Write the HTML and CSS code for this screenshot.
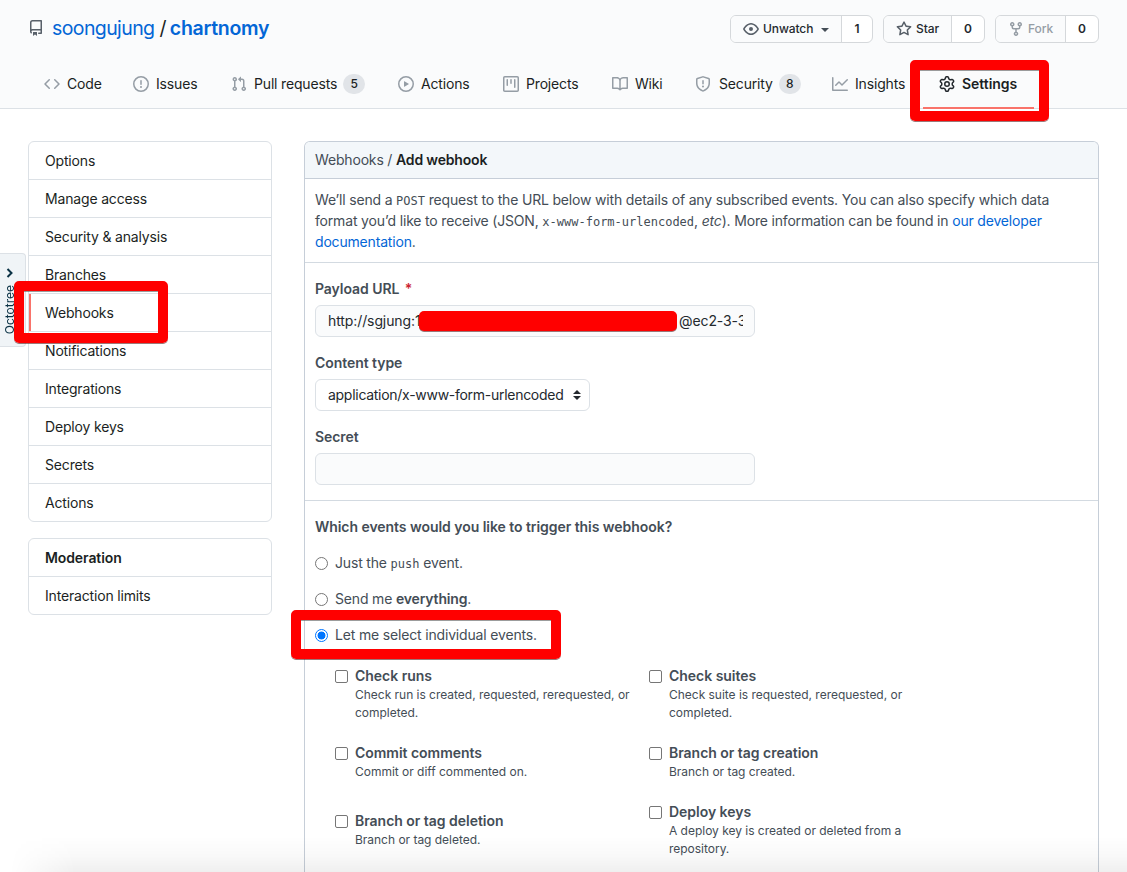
FILE: index.html
```html
<!DOCTYPE html>
<html lang="en">
<head>
<meta charset="utf-8">
<title>Add webhook · soongujung/chartnomy</title>
<link rel="stylesheet" href="styles.css">
</head>
<body>
<header class="repo-head">
  <div class="repo-top">
    <svg class="repo-icon" viewBox="0 0 16 16" width="16" height="16"><path fill-rule="evenodd" d="M2 2.5A2.5 2.5 0 014.5 0h8.75a.75.75 0 01.75.75v12.5a.75.75 0 01-.75.75h-2.5a.75.75 0 110-1.5h1.75v-2h-8a1 1 0 00-.714 1.7.75.75 0 01-1.072 1.05A2.495 2.495 0 012 11.500v-9zm10.500-1V9h-8c-.356 0-.694.074-1 .208V2.500a1 1 0 011-1h8zM5 12.250v3.250a.25.25 0 00.4.2l1.450-1.087a.25.25 0 01.3 0L8.600 15.700a.25.25 0 00.4-.2v-3.250a.25.25 0 00-.25-.25h-3.500a.25.25 0 00-.25.25z"/></svg>
    <h1 class="repo-name"><a class="owner">soongujung</a><span class="slash">/</span><a class="repo">chartnomy</a></h1>
    <div class="repo-actions">
      <div class="btn-group watch"><span class="btn"><svg viewBox="0 0 16 16" width="16" height="16"><path fill-rule="evenodd" d="M1.679 7.932c.412-.621 1.242-1.750 2.366-2.717C5.175 4.242 6.527 3.500 8 3.500c1.473 0 2.824.742 3.955 1.715 1.124.967 1.954 2.096 2.366 2.717a.119.119 0 010 .136c-.412.621-1.242 1.750-2.366 2.717C10.825 11.758 9.473 12.500 8 12.500c-1.473 0-2.824-.742-3.955-1.715C2.920 9.818 2.090 8.690 1.679 8.068a.119.119 0 010-.136zM8 2c-1.981 0-3.670.992-4.933 2.078C1.797 5.169.880 6.423.430 7.100a1.619 1.619 0 000 1.798c.450.678 1.367 1.932 2.637 3.024C4.329 13.008 6.019 14 8 14c1.981 0 3.670-.992 4.933-2.078 1.270-1.091 2.187-2.345 2.637-3.023a1.619 1.619 0 000-1.798c-.450-.678-1.367-1.932-2.637-3.023C11.671 2.992 9.981 2 8 2zm0 8a2 2 0 100-4 2 2 0 000 4z"/></svg>Unwatch<i class="caret"></i></span><span class="count">1</span></div>
      <div class="btn-group star"><span class="btn"><svg viewBox="0 0 16 16" width="16" height="16"><path fill-rule="evenodd" d="M8 .25a.75.75 0 01.673.418l1.882 3.815 4.210.612a.75.75 0 01.416 1.279l-3.046 2.970.719 4.192a.75.75 0 01-1.088.791L8 12.347l-3.766 1.980a.75.75 0 01-1.088-.790l.720-4.194L.818 6.374a.75.75 0 01.416-1.280l4.210-.611L7.327.668A.75.75 0 018 .250zm0 2.445L6.615 5.500a.75.75 0 01-.564.410l-3.097.450 2.240 2.184a.75.75 0 01.216.664l-.528 3.084 2.769-1.456a.75.75 0 01.698 0l2.770 1.456-.530-3.084a.75.75 0 01.216-.664l2.240-2.183-3.096-.450a.75.75 0 01-.564-.410L8 2.694z"/></svg>Star</span><span class="count">0</span></div>
      <div class="btn-group fork"><span class="btn disabled"><svg viewBox="0 0 16 16" width="16" height="16"><path fill-rule="evenodd" d="M5 3.250a.75.75 0 11-1.500 0 .75.75 0 011.500 0zm0 2.122a2.250 2.250 0 10-1.500 0v.878A2.250 2.250 0 005.750 8.500h1.500v2.128a2.251 2.251 0 101.500 0V8.500h1.500a2.250 2.250 0 002.250-2.250v-.878a2.250 2.250 0 10-1.500 0v.878a.75.75 0 01-.75.750h-4.500A.75.75 0 015 6.250v-.878zm3.750 7.378a.75.75 0 11-1.500 0 .75.75 0 011.500 0zm3-8.750a.75.75 0 100-1.500.75.75 0 000 1.500z"/></svg>Fork</span><span class="count">0</span></div>
    </div>
  </div>
  <nav class="tabs">
    <a class="tab t-code"><svg viewBox="0 0 16 16" width="16" height="16"><path fill-rule="evenodd" d="M4.720 3.220a.75.75 0 011.060 1.060L2.060 8l3.720 3.720a.75.75 0 11-1.060 1.060L.470 8.530a.75.75 0 010-1.060l4.250-4.250zm6.560 0a.75.75 0 10-1.060 1.060L13.940 8l-3.720 3.720a.75.75 0 101.060 1.060l4.250-4.250a.75.75 0 000-1.060l-4.250-4.250z"/></svg><span>Code</span></a>
    <a class="tab t-issues"><svg viewBox="0 0 16 16" width="16" height="16"><path fill-rule="evenodd" d="M8 1.500a6.500 6.500 0 100 13 6.500 6.500 0 000-13zM0 8a8 8 0 1116 0A8 8 0 010 8zm9 3a1 1 0 11-2 0 1 1 0 012 0zm-.25-6.250a.75.75 0 00-1.500 0v3.500a.75.75 0 001.500 0v-3.500z"/></svg><span>Issues</span></a>
    <a class="tab t-pulls"><svg viewBox="0 0 16 16" width="16" height="16"><path fill-rule="evenodd" d="M7.177 3.073L9.573.677A.25.25 0 0110 .854v4.792a.25.25 0 01-.427.177L7.177 3.427a.25.25 0 010-.354zM3.750 2.500a.75.75 0 100 1.500.75.75 0 000-1.500zm-2.250.750a2.250 2.250 0 113 2.122v5.256a2.251 2.251 0 11-1.500 0V5.372A2.250 2.250 0 011.500 3.250zM11 2.500h-1V4h1a1 1 0 011 1v5.628a2.251 2.251 0 101.500 0V5A2.500 2.500 0 0011 2.500zm1 10.250a.75.75 0 111.500 0 .75.75 0 01-1.500 0zM3.750 12a.75.75 0 100 1.500.75.75 0 000-1.500z"/></svg><span>Pull requests</span><b class="badge">5</b></a>
    <a class="tab t-actions"><svg viewBox="0 0 16 16" width="16" height="16"><path fill-rule="evenodd" d="M1.500 8a6.500 6.500 0 1113 0 6.500 6.500 0 01-13 0zM8 0a8 8 0 100 16A8 8 0 008 0zM6.379 5.227A.25.25 0 006 5.442v5.117a.25.25 0 00.379.214l4.264-2.559a.25.25 0 000-.428L6.379 5.227z"/></svg><span>Actions</span></a>
    <a class="tab t-projects"><svg viewBox="0 0 16 16" width="16" height="16"><path fill-rule="evenodd" d="M1.750 0A1.750 1.750 0 000 1.750v12.500C0 15.216.784 16 1.750 16h12.500A1.750 1.750 0 0016 14.250V1.750A1.750 1.750 0 0014.250 0H1.750zM1.500 1.750a.25.25 0 01.25-.25h12.500a.25.25 0 01.25.25v12.500a.25.25 0 01-.25.25H1.750a.25.25 0 01-.25-.25V1.750zM11.750 3a.75.75 0 00-.75.750v7.500a.75.75 0 001.500 0v-7.500a.75.75 0 00-.75-.75zm-8.250.750a.75.75 0 011.500 0v5.500a.75.75 0 01-1.500 0v-5.500zM8 3a.75.75 0 00-.75.750v3.500a.75.75 0 001.500 0v-3.500A.75.75 0 008 3z"/></svg><span>Projects</span></a>
    <a class="tab t-wiki"><svg viewBox="0 0 16 16" width="16" height="16"><path fill-rule="evenodd" d="M0 1.750A.75.75 0 01.750 1h4.253c1.227 0 2.317.590 3 1.501A3.744 3.744 0 0111.006 1h4.245a.75.75 0 01.750.750v10.500a.75.75 0 01-.75.750h-4.507a2.250 2.250 0 00-1.591.659l-.622.621a.75.75 0 01-1.060 0l-.622-.621A2.250 2.250 0 005.258 13H.750a.75.75 0 01-.75-.75V1.750zm8.755 3a2.250 2.250 0 012.250-2.250H14.500v9h-3.757c-.710 0-1.400.201-1.992.572l.004-7.322zm-1.504 7.324l.004-5.073-.002-2.253A2.250 2.250 0 005.003 2.500H1.500v9h3.757a3.750 3.750 0 011.994.574z"/></svg><span>Wiki</span></a>
    <a class="tab t-security"><svg viewBox="0 0 16 16" width="16" height="16"><path fill-rule="evenodd" d="M7.467.133a1.750 1.750 0 011.066 0l5.250 1.680A1.750 1.750 0 0115 3.480V7c0 1.566-.320 3.182-1.303 4.682-.983 1.498-2.585 2.813-5.032 3.855a1.700 1.700 0 01-1.330 0c-2.447-1.042-4.049-2.357-5.032-3.855C1.320 10.182 1 8.566 1 7V3.480a1.750 1.750 0 011.217-1.667l5.250-1.680zm.610 1.429a.25.25 0 00-.153 0l-5.250 1.680a.25.25 0 00-.174.238V7c0 1.358.275 2.666 1.057 3.860.784 1.194 2.121 2.340 4.366 3.297a.2.2 0 00.154 0c2.245-.956 3.582-2.104 4.366-3.298C13.225 9.666 13.500 8.360 13.500 7V3.480a.25.25 0 00-.174-.237l-5.250-1.680zM9 10.500a1 1 0 11-2 0 1 1 0 012 0zm-.25-5.750a.75.75 0 10-1.500 0v3a.75.75 0 001.500 0v-3z"/></svg><span>Security</span><b class="badge">8</b></a>
    <a class="tab t-insights"><svg viewBox="0 0 16 16" width="16" height="16"><path fill-rule="evenodd" d="M1.500 1.750a.75.75 0 00-1.500 0v12.500c0 .414.336.750.750.750h14.500a.75.75 0 000-1.500H1.500V1.750zm14.280 2.530a.75.75 0 00-1.060-1.060L10 7.940 7.530 5.470a.75.75 0 00-1.060 0L3.220 8.720a.75.75 0 001.060 1.060L7 7.060l2.470 2.470a.75.75 0 001.060 0l5.250-5.250z"/></svg><span>Insights</span></a>
    <a class="tab t-settings selected"><svg viewBox="0 0 16 16" width="16" height="16"><path fill-rule="evenodd" d="M7.429 1.525a6.593 6.593 0 011.142 0c.036.003.108.036.137.146l.289 1.105c.147.560.550.967.997 1.189.174.086.341.183.501.290.417.278.970.423 1.530.270l1.102-.303c.110-.030.175.016.195.046.219.310.410.641.573.989.014.031.022.110-.059.190l-.815.806c-.411.406-.562.957-.530 1.456a4.588 4.588 0 010 .582c-.032.499.119 1.050.530 1.456l.815.806c.080.080.073.159.059.190a6.494 6.494 0 01-.573.990c-.020.029-.086.074-.195.045l-1.103-.303c-.559-.153-1.112-.008-1.529.270-.160.107-.327.204-.500.290-.449.222-.851.628-.998 1.189l-.289 1.105c-.029.110-.101.143-.137.146a6.613 6.613 0 01-1.142 0c-.036-.003-.108-.037-.137-.146l-.289-1.105c-.147-.560-.550-.967-.997-1.189a4.502 4.502 0 01-.501-.290c-.417-.278-.970-.423-1.530-.270l-1.102.303c-.110.030-.175-.016-.195-.046a6.492 6.492 0 01-.573-.989c-.014-.031-.022-.110.059-.190l.815-.806c.411-.406.562-.957.530-1.456a4.587 4.587 0 010-.582c.032-.499-.119-1.050-.530-1.456l-.815-.806c-.080-.080-.073-.159-.059-.190a6.440 6.440 0 01.573-.990c.020-.029.086-.075.195-.045l1.103.303c.559.153 1.112.008 1.529-.270.160-.107.327-.204.500-.290.449-.222.851-.628.998-1.189l.289-1.105c.029-.110.101-.143.137-.146zM8 0c-.236 0-.470.010-.701.030-.743.065-1.290.615-1.458 1.261l-.290 1.106c-.017.066-.078.158-.211.224a5.994 5.994 0 00-.668.386c-.123.082-.233.090-.300.071L3.270 2.776c-.644-.177-1.392.020-1.820.630a7.977 7.977 0 00-.704 1.217c-.315.675-.111 1.422.363 1.891l.815.806c.050.048.098.147.088.294a6.084 6.084 0 000 .772c.010.147-.038.246-.088.294l-.815.806c-.474.469-.678 1.216-.363 1.891.200.428.436.835.704 1.218.428.609 1.176.806 1.820.630l1.103-.303c.066-.019.176-.011.299.071.213.143.436.272.668.386.133.066.194.158.212.224l.289 1.106c.169.646.715 1.196 1.458 1.260a8.094 8.094 0 001.402 0c.743-.064 1.290-.614 1.458-1.260l.290-1.106c.017-.066.078-.158.211-.224a5.980 5.980 0 00.668-.386c.123-.082.233-.090.300-.071l1.102.302c.644.177 1.392-.020 1.820-.630.268-.382.505-.789.704-1.217.315-.675.111-1.422-.364-1.891l-.814-.806c-.050-.048-.098-.147-.088-.294a6.100 6.100 0 000-.772c-.010-.147.039-.246.088-.294l.814-.806c.475-.469.679-1.216.364-1.891a7.992 7.992 0 00-.704-1.218c-.428-.609-1.176-.806-1.820-.630l-1.103.303c-.066.019-.176.011-.299-.071a5.991 5.991 0 00-.668-.386c-.133-.066-.194-.158-.212-.224L10.160 1.290C9.990.645 9.444.095 8.701.031A8.094 8.094 0 008 0zm1.500 8a1.500 1.500 0 11-3 0 1.500 1.500 0 013 0zM11 8a3 3 0 11-6 0 3 3 0 016 0z"/></svg><span>Settings</span></a>
  </nav>
</header>

<div class="layout">
  <aside class="side">
    <ul class="menu">
      <li>Options</li><li>Manage access</li><li>Security &amp; analysis</li><li>Branches</li><li class="current">Webhooks</li><li>Notifications</li><li>Integrations</li><li>Deploy keys</li><li>Secrets</li><li>Actions</li>
    </ul>
    <ul class="menu">
      <li class="menu-title">Moderation</li><li>Interaction limits</li>
    </ul>
  </aside>

  <main class="panel">
    <h2 class="panel-title">Webhooks / <b>Add webhook</b></h2>
    <p class="intro">We’ll send a <code>POST</code> request to the URL below with details of any subscribed events. You can also specify which data<br>format you’d like to receive (JSON, <code>x-www-form-urlencoded</code>, <em>etc</em>). More information can be found in <a>our developer</a><br><a>documentation</a>.</p>
    <section class="fields">
      <label class="label">Payload URL <span class="req">*</span></label>
      <div class="input url"><span class="url-text"><span>http://sgjung:1</span><span class="url-end">@ec2-3-3</span></span><i class="redaction"></i></div>
      <label class="label">Content type</label>
      <div class="select"><span>application/x-www-form-urlencoded</span><svg viewBox="0 0 8 10" width="8" height="10"><path d="M4 0l4 4H0zM4 10L0 6h8z"/></svg></div>
      <label class="label">Secret</label>
      <div class="input"></div>
    </section>
    <section class="events">
      <h3 class="question">Which events would you like to trigger this webhook?</h3>
      <div class="choice"><i class="radio"></i><span>Just the <code>push</code> event.</span></div>
      <div class="choice"><i class="radio"></i><span>Send me <b>everything</b>.</span></div>
      <div class="choice"><i class="radio checked"></i><span>Let me select individual events.</span></div>
      <div class="columns">
        <div class="column">
          <div class="event"><i class="check"></i><div><b>Check runs</b><p>Check run is created, requested, rerequested, or<br>completed.</p></div></div>
          <div class="event tall"><i class="check"></i><div><b>Commit comments</b><p>Commit or diff commented on.</p></div></div>
          <div class="event"><i class="check"></i><div><b>Branch or tag deletion</b><p>Branch or tag deleted.</p></div></div>
        </div>
        <div class="column">
          <div class="event"><i class="check"></i><div><b>Check suites</b><p>Check suite is requested, rerequested, or<br>completed.</p></div></div>
          <div class="event"><i class="check"></i><div><b>Branch or tag creation</b><p>Branch or tag created.</p></div></div>
          <div class="event"><i class="check"></i><div><b>Deploy keys</b><p>A deploy key is created or deleted from a<br>repository.</p></div></div>
        </div>
      </div>
    </section>
  </main>
</div>

<div class="octotree"><svg viewBox="0 0 8 10" width="8" height="10"><path d="M1.500 1l4 4-4 4" fill="none" stroke="#0b3245" stroke-width="2"/></svg><span>Octotree</span></div>
<div class="mark mark-settings"></div>
<div class="mark mark-webhooks"></div>
<div class="mark mark-events"></div>
<div class="bottom-shadow"></div>
</body>
</html>
```
FILE: styles.css
```css
* { box-sizing: border-box; }
body {
  margin: 0;
  position: relative;
  width: 1127px;
  height: 872px;
  overflow: hidden;
  background: #fff;
  color: #1b1f23;
  font: 14px/21px Inter, "Liberation Sans", sans-serif;
  letter-spacing: -0.17px;
}
h1, h2, h3, p, ul { margin: 0; padding: 0; }
ul { list-style: none; }
b { font-weight: 600; }
svg { display: block; flex: none; fill: currentColor; }
a { color: #0366d6; }
code { font: 12px/1 "DejaVu Sans Mono", monospace; letter-spacing: 0; }

/* Repository header */
.repo-head { height: 109px; background: #fafbfc; border-bottom: 1px solid #dce1e6; }
.repo-top { display: flex; align-items: center; height: 60px; padding: 0 28px; }
.repo-icon { margin: -5px 8px 0 0; color: #586069; }
.repo-name { font-size: 19.5px; line-height: 30px; font-weight: 400; margin-top: -4px; letter-spacing: -0.6px; white-space: nowrap; }
.slash { margin: 0 4px 0 5px; }
.repo { font-weight: 600; letter-spacing: -0.3px; }
.repo-actions { display: flex; gap: 10px; margin: -2px 0 0 auto; }
.btn-group { display: flex; height: 28px; border: 1px solid #d5d8db; border-radius: 6px; background: #fff; font-size: 12px; font-weight: 500; letter-spacing: -0.1px; color: #24292e; overflow: hidden; }
.btn { display: flex; align-items: center; flex: 1; padding: 0 0 1px 12px; background: #fafbfc; border-right: 1px solid #d5d8db; }
.btn svg { margin: 1px 4px 0 0; color: #586069; }
.btn.disabled, .btn.disabled svg { color: #959da5; }
.count { width: 30px; display: flex; align-items: center; justify-content: center; padding-bottom: 1px; font-weight: 600; }
.watch { width: 143px; }
.star { width: 102px; }
.fork { width: 104px; }
.star .count, .fork .count { width: 32px; }
.caret { margin: 2px 0 0 8px; border: 4px solid transparent; border-top-color: #444d56; border-bottom: 0; }

.tabs { display: flex; height: 49px; padding-left: 28px; }
.tab { display: flex; align-items: center; padding: 0 0 1px 16px; white-space: nowrap; color: #1b1f23; }
.tab span { margin-top: -2px; }
.tab svg { margin-right: 7px; color: #959da5; }
.t-code { width: 89px; }
.t-issues { width: 98px; }
.t-pulls { width: 167px; }
.t-actions { width: 105px; }
.t-projects { width: 109px; }
.t-wiki { width: 83px; }
.t-security { width: 137px; }
.t-insights { width: 107px; }
.t-settings { width: 111px; }
.tab.t-security svg { margin-right: 8px; }
.tab.selected { font-weight: 600; letter-spacing: -0.05px; border-bottom: 2px solid #f9736a; padding-bottom: 0; padding-top: 1px; }
.tab.selected svg { color: #24292e; }
.badge { margin-left: 6px; min-width: 22px; height: 20px; border-radius: 10px; background: #e1e4e8; text-align: center; font-size: 12px; line-height: 20px; font-weight: 500; }

/* Page body */
.layout { display: flex; gap: 32px; padding: 32px 28px 0; }
.side { width: 244px; flex: none; }
.menu { border: 1px solid #dce1e6; border-radius: 6px; margin-bottom: 16px; }
.menu li { height: 38px; padding: 8px 16px; border-bottom: 1px solid #dce1e6; }
.menu li:last-child { height: 37px; border-bottom: 0; }
.menu .current { box-shadow: inset 2px 0 #f9736a; }
.menu-title { font-weight: 600; letter-spacing: -0.1px; }

.panel { width: 795px; height: 731px; border: 1px solid #c6ced8; border-bottom: 0; border-radius: 6px 6px 0 0; color: #444d56; overflow: hidden; }
.panel-title { height: 37px; padding: 7px 10px; font-size: 14px; line-height: 21px; font-weight: 400; background: #f3f7fa; border-bottom: 1px solid #c6ced8; }
.panel-title b { color: #1b1f23; }
.intro { height: 84px; padding: 10px 10px 0; border-bottom: 1px solid #d3dae1; white-space: nowrap; letter-spacing: -0.18px; }
.intro code { letter-spacing: 0; }
.fields { height: 238px; padding: 15px 10px 0; border-bottom: 1px solid #d3dae1; }
.label { display: block; height: 21px; margin-bottom: 6px; font-weight: 600; letter-spacing: -0.06px; }
.req { color: #cb2431; margin-left: 2px; }
.input, .select { height: 32px; margin-bottom: 15px; border: 1px solid #dce1e6; border-radius: 6px; padding: 4px 12px 6px; color: #24292e; }
.input { width: 440px; background: #fafbfc; }
.url { position: relative; }
.url-text { display: flex; justify-content: space-between; width: 415px; overflow: hidden; white-space: nowrap; letter-spacing: -0.1px; }
.url-end { width: 64px; overflow: hidden; }
.redaction { position: absolute; left: 103px; top: 5px; width: 258px; height: 20px; border-radius: 5px; background: #f00; box-shadow: 0 1px 0 rgba(90, 30, 30, .6); }
.select { display: flex; align-items: center; justify-content: space-between; width: 275px; padding-right: 8px; letter-spacing: -0.28px; }
.select svg { margin-top: 2px; }

.events { padding: 15px 10px; }
.question { font-size: 14px; line-height: 21px; font-weight: 600; margin-bottom: 15px; letter-spacing: -0.05px; }
.choice { display: flex; align-items: center; height: 21px; margin-bottom: 15px; }
.radio { width: 13px; height: 13px; flex: none; border: 1px solid #767676; border-radius: 50%; margin: 2px 7px 0 0; background: #fff; }
.radio.checked { border-color: #0075ff; background: radial-gradient(circle, #0075ff 0 3.600px, #fff 4.300px); }
.columns { display: flex; padding: 5px 0 0 20px; }
.column { width: 314px; }
.event { display: flex; margin-bottom: 20px; }
.event.tall { margin-bottom: 29px; }
.event b { display: block; line-height: 21px; letter-spacing: -0.03px; }
.event p { font-size: 12px; line-height: 18px; white-space: nowrap; letter-spacing: -0.02px; }
.check { width: 13px; height: 13px; flex: none; margin: 5px 7px 0 0; border: 1px solid #767676; border-radius: 2px; background: #fff; }

/* Browser extension tab */
.octotree { position: absolute; left: 0; top: 253px; width: 26px; height: 94px; padding-top: 14px; display: flex; flex-direction: column; align-items: center; gap: 7px; background: #f0f4f7; border: 1px solid #dce1e6; border-left: 0; border-radius: 0 4px 4px 0; font-size: 12px; letter-spacing: 0; color: #0b3245; }
.octotree svg { margin-right: 5px; }
.octotree span { writing-mode: vertical-rl; transform: rotate(180deg); line-height: 16px; margin-right: 5px; }

/* Highlight frames */
.mark { position: absolute; border: 10px solid #f00; border-radius: 5px; box-shadow: 0 1px 0 rgba(90, 30, 30, .6), inset 0 1px 0 rgba(90, 90, 90, .6); }
.mark-settings { left: 910px; top: 60px; width: 139px; height: 61px; }
.mark-webhooks { left: 14px; top: 281px; width: 154px; height: 62px; }
.mark-events { left: 291px; top: 610px; width: 270px; height: 49px; }

/* Shade that rises from the window's lower edge */
.bottom-shadow {
  position: absolute; left: 0; bottom: 0; width: 1127px; height: 36px;
  background: linear-gradient(to top, rgba(0, 0, 0, .062), rgba(0, 0, 0, .022) 45%, transparent);
  -webkit-mask-image: linear-gradient(to right, transparent 10px, #000 75px);
  mask-image: linear-gradient(to right, transparent 10px, #000 75px);
}
```
